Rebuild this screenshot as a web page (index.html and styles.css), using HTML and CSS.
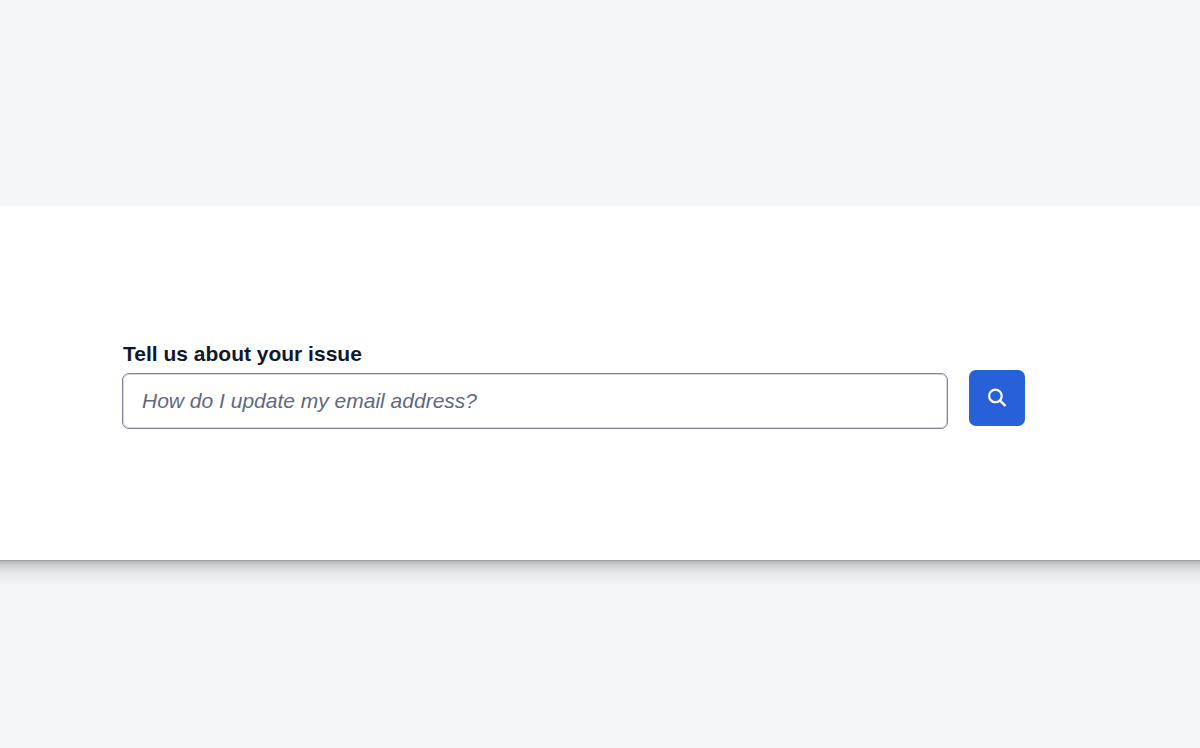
FILE: index.html
```html
<!DOCTYPE html>
<html lang="en">
<head>
    <meta charset="UTF-8">
    <meta name="viewport" content="width=device-width, initial-scale=1.0">
    <title>Support Search</title>
    <link rel="stylesheet" href="styles.css">
</head>
<body>

    <main class="panel">
        <form class="search-form" role="search">
            <div class="form-group">
                <label for="issue">Tell us about your issue</label>
                <input type="text" id="issue" name="issue" placeholder="How do I update my email address?">
            </div>
            <button type="submit" aria-label="Search">
                <svg width="20" height="20" viewBox="0 0 20 20" fill="none" stroke="currentColor" stroke-width="2.2" aria-hidden="true">
                    <circle cx="8.4" cy="7.9" r="6.3"/>
                    <path d="M12.8 12.3L18.5 18" stroke-width="2.4"/>
                </svg>
            </button>
        </form>
    </main>

</body>
</html>
```

FILE: styles.css
```css
* {
    box-sizing: border-box;
}
body {
    margin: 0;
    padding: 206px 0;
    font-family: "Helvetica Neue", Helvetica, "Liberation Sans", Arial, sans-serif;
    background-color: #f4f5f7;
}
.panel {
    position: relative;
    padding: 132px 175px 131px 122px;
    background-color: #fff;
}
/* Shadow along the bottom edge, same strength across the full width */
.panel::after {
    content: "";
    position: absolute;
    top: 100%;
    left: 0;
    right: 0;
    height: 24px;
    border-top: 1px solid #a2a3a5;
    background: linear-gradient(rgba(0, 0, 0, 0.26), rgba(0, 0, 0, 0.14) 20%, rgba(0, 0, 0, 0.05) 50%, rgba(0, 0, 0, 0));
}
.search-form {
    display: flex;
    align-items: flex-end;
    gap: 21px;
}
.form-group {
    flex: 1;
}
label {
    display: block;
    padding-left: 1px;
    margin-bottom: 3px;
    font-size: 21px;
    line-height: 32px;
    font-weight: bold;
    color: #12182b;
}
input[type="text"] {
    display: block;
    width: 100%;
    height: 56px;
    padding: 0 19px;
    border: 1px solid #80819a;
    border-radius: 7px;
    box-shadow: inset 0 0 0 1px rgba(122, 123, 144, 0.3);
    font-family: inherit;
    font-size: 21px;
    color: #12182b;
    background-color: #fff;
}
input::placeholder {
    font-style: italic;
    color: #5f6880;
    opacity: 1;
}
button {
    display: flex;
    align-items: center;
    justify-content: center;
    width: 56px;
    height: 56px;
    margin-bottom: 3px; /* sits slightly above the field */
    padding: 0;
    border: none;
    border-radius: 7px;
    color: #fff;
    background-color: #2860da;
    cursor: pointer;
}
```
